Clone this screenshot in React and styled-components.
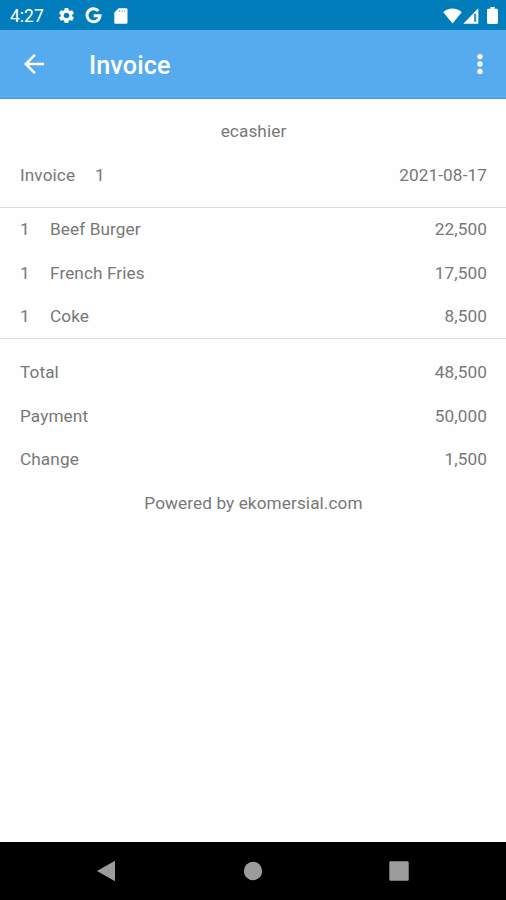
import React from 'react';
import styled, { createGlobalStyle } from 'styled-components';
import { MdSettings, MdArrowBack } from 'react-icons/md';

const items = [
  { qty: 1, name: 'Beef Burger', price: '22,500' },
  { qty: 1, name: 'French Fries', price: '17,500' },
  { qty: 1, name: 'Coke', price: '8,500' },
];

const totals = [
  { label: 'Total', value: '48,500' },
  { label: 'Payment', value: '50,000' },
  { label: 'Change', value: '1,500' },
];

const StatusIcons = () => (
  <SystemIcons>
    <svg width="19" height="16" viewBox="0 0 19 16">
      <path d="M0.3 4.2C5.4-.8 13.4-.8 18.7 4.2L9.5 15.6Z" />
    </svg>
    <svg width="16" height="16" viewBox="0 0 16 16">
      <path d="M15.3 0.3V15.7H0.3Z" />
      <path d="M11 5.8H13.3V13.9H11Z" fill="#3f9bcd" />
    </svg>
    <svg width="11" height="17" viewBox="0 0 11 17">
      <path d="M3.3 0H7.7V1.8H9.6Q11 1.8 11 3.2V15.6Q11 17 9.6 17H1.4Q0 17 0 15.6V3.2Q0 1.8 1.4 1.8H3.3Z" />
    </svg>
  </SystemIcons>
);

const App = () => {
  return (
    <Screen>
      <GlobalStyle />
      <StatusBar>
        <Clock>4:27</Clock>
        <Notifications>
          <MdSettings size={19} />
          <svg width="17" height="17" viewBox="0 0 17 17">
            <path
              d="M13.4 4A6.5 6.5 0 1 0 15 8.7H8.7"
              fill="none"
              stroke="#fff"
              strokeWidth="3"
            />
          </svg>
          <svg width="14" height="16" viewBox="0 0 14 16">
            <path
              d="M4.6 0.3H12.2Q13.5 0.3 13.5 1.6V14.4Q13.5 15.7 12.2 15.7H1.6Q0.3 15.7 0.3 14.4V4.6Z"
              fill="#fff"
            />
            <path d="M5 2.2H6.2V4H5ZM7.6 2.2H8.8V4H7.6ZM10.2 2.2H11.4V4H10.2Z" fill="#7fbcde" />
          </svg>
        </Notifications>
        <StatusIcons />
      </StatusBar>
      <AppBar>
        <IconButton aria-label="Back">
          <MdArrowBack size={30} />
        </IconButton>
        <Title>Invoice</Title>
        <IconButton aria-label="More options">
          <svg width="6" height="22" viewBox="0 0 6 22" fill="currentColor">
            <circle cx="3" cy="3.6" r="2.7" />
            <circle cx="3" cy="11" r="2.7" />
            <circle cx="3" cy="18.4" r="2.7" />
          </svg>
        </IconButton>
      </AppBar>
      <Content>
        <Section $top={10.7} $bottom={10}>
          <Row $center>ecashier</Row>
          <Row>
            <InvoiceLabel>Invoice</InvoiceLabel>
            <span>1</span>
            <Amount>2021-08-17</Amount>
          </Row>
        </Section>
        <Section $top={0} $bottom={0} $lined>
          {items.map((item) => (
            <Row key={item.name}>
              <Quantity>{item.qty}</Quantity>
              <span>{item.name}</span>
              <Amount>{item.price}</Amount>
            </Row>
          ))}
        </Section>
        <Section $top={11.2} $bottom={0}>
          {totals.map((total) => (
            <Row key={total.label}>
              <span>{total.label}</span>
              <Amount>{total.value}</Amount>
            </Row>
          ))}
          <Row $center>Powered by ekomersial.com</Row>
        </Section>
      </Content>
      <NavBar>
        <svg width="20" height="22" viewBox="0 0 20 22">
          <path d="M19 0.8V21.2L1 11Z" />
        </svg>
        <svg width="20" height="20" viewBox="0 0 20 20">
          <circle cx="10" cy="10" r="9.2" />
        </svg>
        <svg width="20" height="20" viewBox="0 0 20 20">
          <rect x="0.3" y="0.3" width="19.4" height="19.4" rx="1.3" />
        </svg>
      </NavBar>
    </Screen>
  );
};

const GlobalStyle = createGlobalStyle`
  * {
    box-sizing: border-box;
  }
  body {
    margin: 0;
    background: #fefefe;
    font-family: Roboto, sans-serif;
  }
  svg {
    display: block;
    flex: none;
  }
`;

const Screen = styled.div`
  display: flex;
  flex-direction: column;
  height: 100vh;
`;

const StatusBar = styled.div`
  display: flex;
  align-items: center;
  height: 30px;
  padding: 1px 8px 0 10px;
  background: #027dbc;
  color: #fff;
`;

const Clock = styled.span`
  width: 47px;
  font-size: 17.5px;
`;

const Notifications = styled.div`
  display: flex;
  align-items: center;
  gap: 9px;
  svg:last-child {
    margin-left: 3px;
  }
`;

const SystemIcons = styled.div`
  display: flex;
  align-items: center;
  margin-left: auto;
  fill: #fff;
  svg:nth-child(2) {
    margin: 0 8px 0 1px;
  }
`;

const AppBar = styled.header`
  display: flex;
  align-items: center;
  height: 69px;
  padding: 0 23px 0 19px;
  background: #55abee;
  border-bottom: 1px solid #429fe3;
  color: #fff;
`;

const IconButton = styled.button`
  display: flex;
  padding: 0;
  border: none;
  background: none;
  color: inherit;
`;

const Title = styled.h1`
  flex: 1;
  margin: 3px 0 0 40px;
  font-size: 25.2px;
  font-weight: 500;
  letter-spacing: 0.1px;
`;

const Content = styled.main`
  flex: 1;
  color: #787878;
  font-size: 17.2px;
  letter-spacing: 0.1px;
`;

const Section = styled.section`
  padding: ${(props) => props.$top}px 0 ${(props) => props.$bottom}px;
  ${(props) =>
    props.$lined &&
    `
    border-top: 1px solid #dcdcdc;
    border-bottom: 1px solid #dcdcdc;
  `}
`;

const Row = styled.div`
  display: flex;
  align-items: center;
  justify-content: ${(props) => (props.$center ? 'center' : 'flex-start')};
  height: 43.5px;
  padding: 0 19px 0 20px;
`;

const InvoiceLabel = styled.span`
  width: 75px;
`;

const Quantity = styled.span`
  width: 30px;
`;

const Amount = styled.span`
  margin-left: auto;
`;

const NavBar = styled.nav`
  display: flex;
  align-items: center;
  justify-content: space-between;
  height: 58px;
  padding: 0 97px 0 96px;
  background: #000;
  fill: #9c9c9c;
`;

export default App;
